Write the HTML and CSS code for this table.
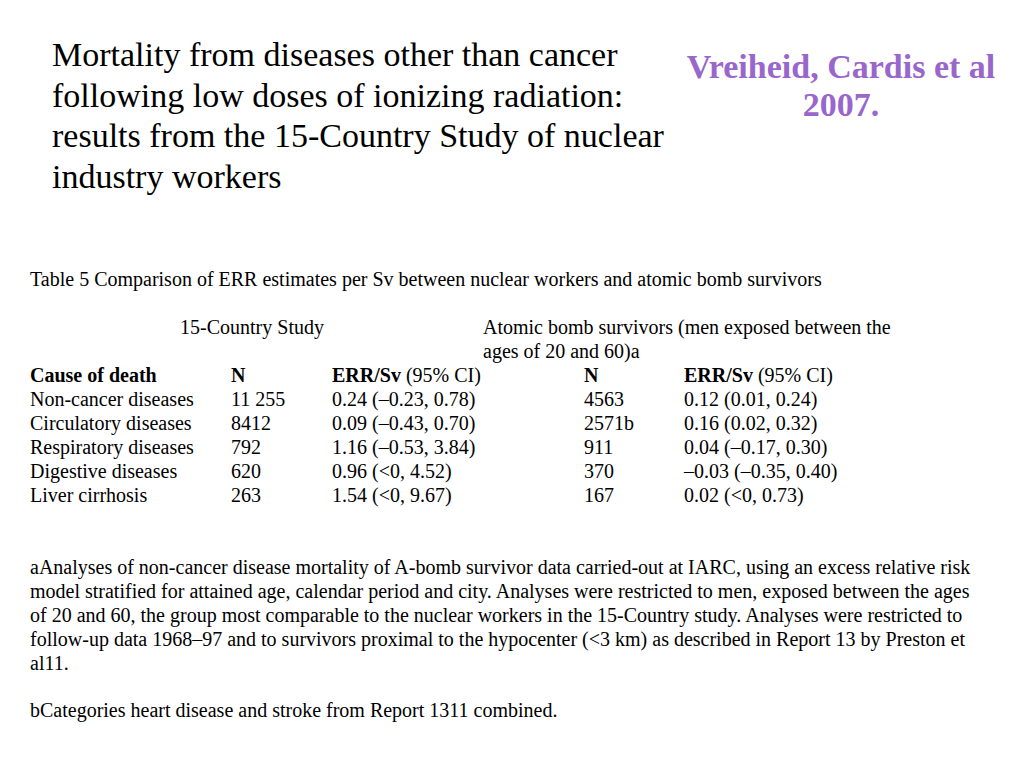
FILE: index.html
```html
<!DOCTYPE html>
<html>
<head>
<meta charset="utf-8">
<link rel="stylesheet" href="styles.css">
</head>
<body>
<div class="slide">
  <div class="top">
    <h1 class="title">Mortality from diseases other than cancer following low doses of ionizing radiation: results from the 15-Country Study of nuclear industry workers</h1>
    <div class="cite">Vreiheid, Cardis et al 2007.</div>
  </div>
  <div class="content">
    <p class="caption">Table 5 Comparison of ERR estimates per Sv between nuclear workers and atomic bomb survivors</p>
    <div class="groups">
      <div class="group-a">15-Country Study</div>
      <div class="group-b">Atomic bomb survivors (men exposed between the ages of 20 and 60)a</div>
    </div>
    <div class="grid">
      <div><b>Cause of death</b></div><div><b>N</b></div><div><b>ERR/Sv</b> (95% CI)</div><div><b>N</b></div><div><b>ERR/Sv</b> (95% CI)</div>
      <div>Non-cancer diseases</div><div>11 255</div><div>0.24 (–0.23, 0.78)</div><div>4563</div><div>0.12 (0.01, 0.24)</div>
      <div>Circulatory diseases</div><div>8412</div><div>0.09 (–0.43, 0.70)</div><div>2571b</div><div>0.16 (0.02, 0.32)</div>
      <div>Respiratory diseases</div><div>792</div><div>1.16 (–0.53, 3.84)</div><div>911</div><div>0.04 (–0.17, 0.30)</div>
      <div>Digestive diseases</div><div>620</div><div>0.96 (&lt;0, 4.52)</div><div>370</div><div>–0.03 (–0.35, 0.40)</div>
      <div>Liver cirrhosis</div><div>263</div><div>1.54 (&lt;0, 9.67)</div><div>167</div><div>0.02 (&lt;0, 0.73)</div>
    </div>
    <div class="notes">
      <p class="note">aAnalyses of non-cancer disease mortality of A-bomb survivor data carried-out at IARC, using an excess relative risk model stratified for attained age, calendar period and city. Analyses were restricted to men, exposed between the ages of 20 and 60, the group most comparable to the nuclear workers in the 15-Country study. Analyses were restricted to follow-up data 1968–97 and to survivors proximal to the hypocenter (&lt;3 km) as described in Report 13 by Preston et al11.</p>
      <p class="note">bCategories heart disease and stroke from Report 1311 combined.</p>
    </div>
  </div>
</div>
</body>
</html>
```

FILE: styles.css
```css
html, body {
  margin: 0;
  padding: 0;
  background: #ffffff;
}
.slide {
  width: 1024px;
  height: 768px;
  overflow: hidden;
  font-family: "Liberation Serif", "Times New Roman", serif;
  color: #000;
}
.top {
  display: flex;
  align-items: flex-start;
  padding-top: 35px;
}
.title {
  margin: 0 0 0 52px;
  width: 630px;
  font-size: 34px;
  font-weight: normal;
  line-height: 40.7px;
}
.cite {
  margin: 13px 0 0 -2px;
  width: 322px;
  text-align: center;
  color: #9966cc;
  font-weight: bold;
  font-size: 34px;
  line-height: 38px;
}
.content {
  margin-top: 69px;
  padding-left: 30px;
  font-size: 20px;
  line-height: 24px;
}
.caption {
  margin: 0 0 24px 0;
}
.groups {
  display: flex;
}
.group-a {
  width: 444px;
  text-align: center;
}
.group-b {
  margin-left: 9px;
  width: 420px;
}
.grid {
  display: grid;
  grid-template-columns: 201px 101px 252px 100px 1fr;
}
.notes {
  margin-top: 48px;
  width: 950px;
}
.note {
  margin: 0 0 23px 0;
}
```
